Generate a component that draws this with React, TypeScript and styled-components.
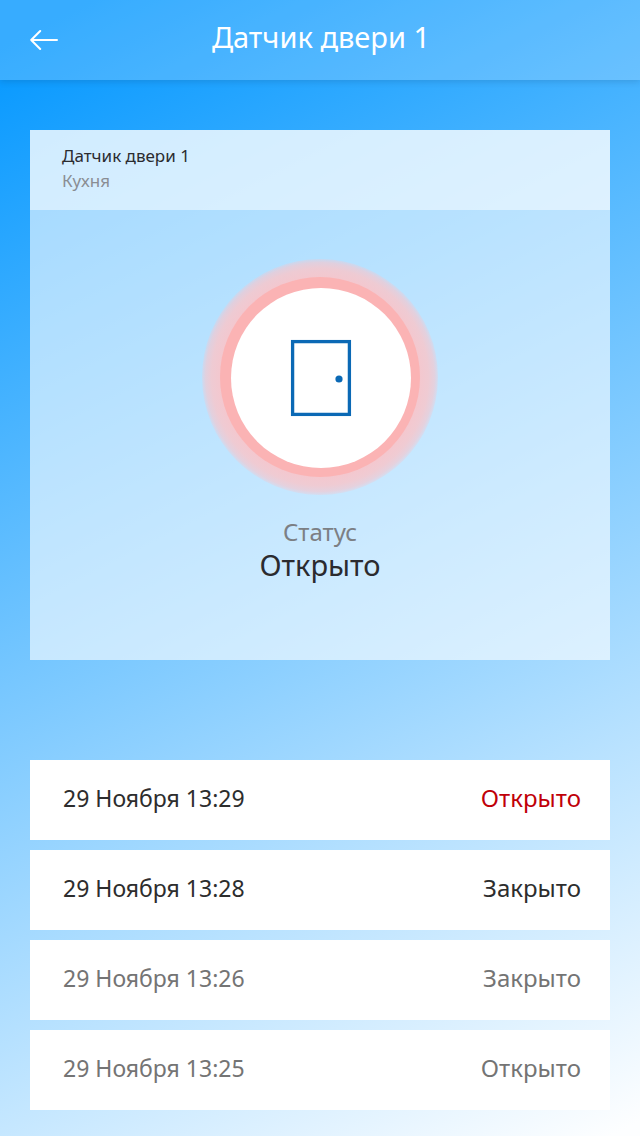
import React from "react";
import styled, { createGlobalStyle } from "styled-components";

const GlobalStyle = createGlobalStyle`
  *, *::before, *::after { box-sizing: border-box; }
  html { min-height: 100%; }
  body {
    margin: 0;
    font-family: "Noto Sans", "Open Sans", sans-serif;
    color: #2b2b2f;
  }
`;

const Screen = styled.div`
  min-height: 100vh;
  background: linear-gradient(153deg, #0598ff 3%, #fdfeff 99%);
`;

const Header = styled.header`
  display: grid;
  grid-template-columns: 88px 1fr 86px;
  align-items: center;
  height: 80px;
  background: rgba(255, 255, 255, 0.2);
  box-shadow: 0 2px 6px rgba(20, 50, 80, 0.16);
`;

const BackButton = styled.button`
  display: flex;
  align-items: center;
  justify-content: center;
  height: 80px;
  padding: 0;
  border: 0;
  background: none;
  color: #ffffff;
  cursor: pointer;
`;

const Title = styled.h1`
  margin: 0;
  padding-bottom: 6px;
  font-size: 29px;
  line-height: 40px;
  font-weight: 400;
  text-align: center;
  color: #ffffff;
`;

const Content = styled.main`
  display: flex;
  flex-direction: column;
  gap: 100px;
  padding: 50px 30px 26px;
`;

const Card = styled.section`
  background: rgba(255, 255, 255, 0.6);
`;

const CardHeader = styled.div`
  height: 80px;
  padding: 14px 32px;
  background: rgba(255, 255, 255, 0.5);
`;

const DeviceName = styled.h2`
  margin: 0;
  font-size: 17px;
  line-height: 24px;
  font-weight: 400;
`;

const Room = styled.p`
  margin: 0;
  font-size: 17px;
  line-height: 26px;
  color: #8a8d93;
`;

const CardBody = styled.div`
  display: flex;
  flex-direction: column;
  align-items: center;
  padding: 47px 0 77px;
`;

const StatusLabel = styled.p`
  margin: 20px 0 0;
  font-size: 24px;
  line-height: 30px;
  color: #7c7f84;
`;

const StatusValue = styled.p`
  margin: 0;
  font-size: 29px;
  line-height: 36px;
`;

const History = styled.ul`
  display: flex;
  flex-direction: column;
  gap: 10px;
  margin: 0;
  padding: 0;
  list-style: none;
`;

type Tone = "normal" | "alert" | "muted";

const tones: Record<Tone, string> = {
  normal: "#2d2d2d",
  alert: "#c00008",
  muted: "#747474",
};

const HistoryRow = styled.li<{ $tone: Tone }>`
  display: flex;
  align-items: center;
  justify-content: space-between;
  height: 80px;
  padding: 0 29px 4px 33px;
  background: #ffffff;
  font-size: 23px;
  line-height: 32px;
  color: ${(p) => tones[p.$tone]};
`;

const EventState = styled.span<{ $tone: Tone }>`
  font-size: 24px;
  color: ${(p) => tones[p.$tone]};
`;

interface Entry {
  time: string;
  state: string;
  row: Tone;
  label: Tone;
}

const entries: Entry[] = [
  { time: "29 Ноября 13:29", state: "Открыто", row: "normal", label: "alert" },
  { time: "29 Ноября 13:28", state: "Закрыто", row: "normal", label: "normal" },
  { time: "29 Ноября 13:26", state: "Закрыто", row: "muted", label: "muted" },
  { time: "29 Ноября 13:25", state: "Открыто", row: "muted", label: "muted" },
];

function ArrowLeft() {
  return (
    <svg width="28" height="22" viewBox="0 0 28 22" fill="none" stroke="currentColor" strokeWidth="2" strokeLinecap="round" strokeLinejoin="round" aria-hidden="true">
      <path d="M27 11H1.2M10.2 2L1.2 11L10.2 20" />
    </svg>
  );
}

function DoorIndicator() {
  return (
    <svg width="240" height="240" viewBox="0 0 240 240" role="img" aria-label="Дверь">
      <defs>
        <radialGradient id="halo">
          <stop offset="0.85" stopColor="#f6c6cc" stopOpacity="0.95" />
          <stop offset="0.92" stopColor="#f4c8ce" stopOpacity="0.9" />
          <stop offset="0.97" stopColor="#f2c8d0" stopOpacity="0.7" />
          <stop offset="1" stopColor="#f0c8d2" stopOpacity="0.3" />
        </radialGradient>
      </defs>
      <circle cx="120" cy="120" r="118" fill="url(#halo)" />
      <circle cx="120" cy="120" r="100" fill="#fbb3b4" />
      <circle cx="121" cy="121" r="90" fill="#ffffff" />
      <rect x="92.6" y="84.6" width="56.8" height="72.8" fill="none" stroke="#0b69b5" strokeWidth="3.3" />
      <circle cx="139" cy="122" r="3.6" fill="#0b69b5" />
    </svg>
  );
}

export default function App() {
  return (
    <>
      <GlobalStyle />
      <Screen>
        <Header>
          <BackButton type="button" aria-label="Назад">
            <ArrowLeft />
          </BackButton>
          <Title>Датчик двери 1</Title>
        </Header>
        <Content>
          <Card>
            <CardHeader>
              <DeviceName>Датчик двери 1</DeviceName>
              <Room>Кухня</Room>
            </CardHeader>
            <CardBody>
              <DoorIndicator />
              <StatusLabel>Статус</StatusLabel>
              <StatusValue>Открыто</StatusValue>
            </CardBody>
          </Card>
          <History>
            {entries.map((e) => (
              <HistoryRow key={e.time} $tone={e.row}>
                <time>{e.time}</time>
                <EventState $tone={e.label}>{e.state}</EventState>
              </HistoryRow>
            ))}
          </History>
        </Content>
      </Screen>
    </>
  );
}
